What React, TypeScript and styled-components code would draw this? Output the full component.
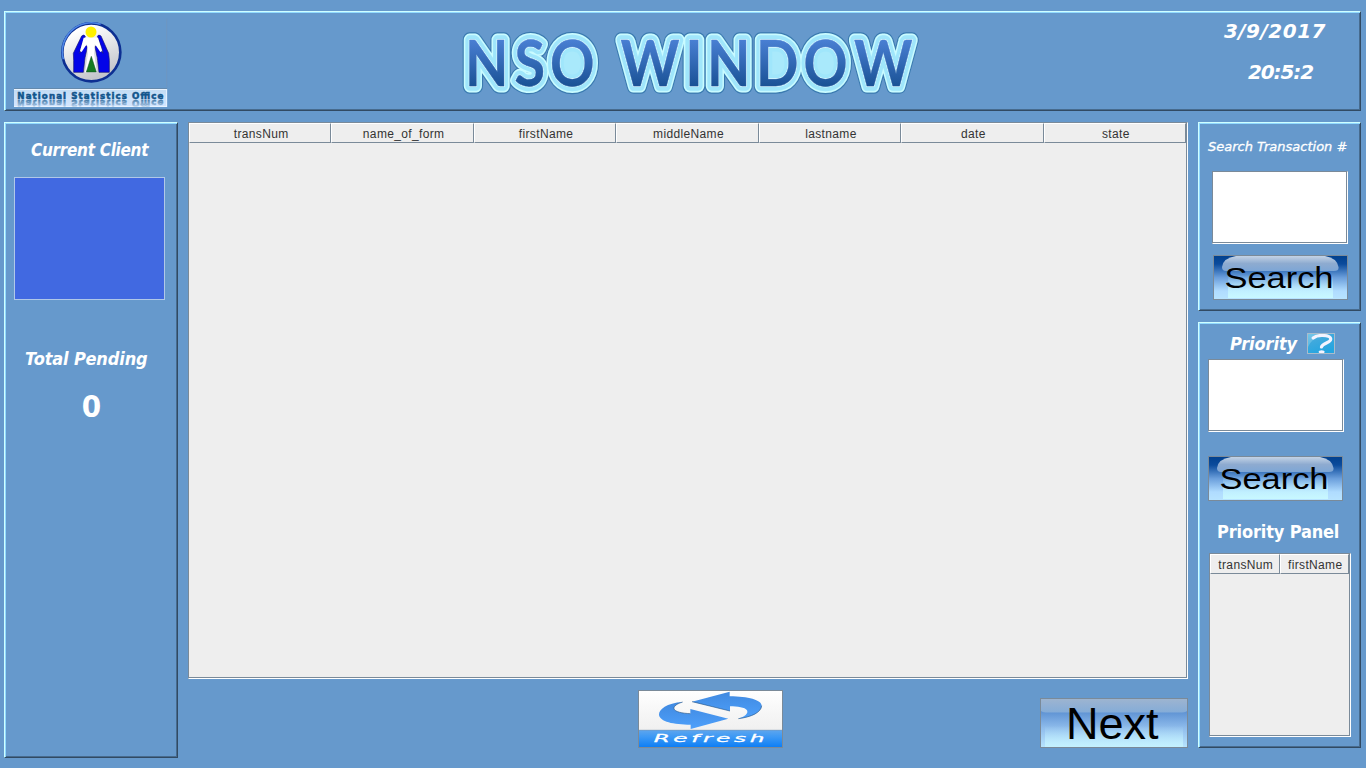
import React from "react";
import styled, { createGlobalStyle, css } from "styled-components";

const GlobalStyle = createGlobalStyle`
  *, *::before, *::after { box-sizing: border-box; }
  body { margin: 0; background: #6699cc; }
  svg { display: block; }
`;

const labelFont = `"DejaVu Sans Condensed", "DejaVu Sans", sans-serif`;

const Page = styled.div`
  width: 1366px;
  height: 768px;
  padding: 11px 5px 10px 4px;
  display: flex;
  flex-direction: column;
  gap: 11px;
  background: #6699cc;
  overflow: hidden;
`;

const raised = css`
  border: 1px solid;
  border-color: #cfffff #314a63 #314a63 #cfffff;
  box-shadow: inset 1px 1px 0 #91daff, inset -1px -1px 0 #476b8e;
`;

const Header = styled.header`
  ${raised}
  height: 100px;
  display: flex;
  align-items: flex-start;
  padding: 5px 34px 0 9px;
`;

const Logo = styled.svg`
  width: 154px;
  height: 90px;
`;

const Title = styled.svg`
  width: 464px;
  height: 90px;
  margin-left: 292px;
`;

const Clock = styled.div`
  margin-left: auto;
  padding-top: 2px;
  display: flex;
  flex-direction: column;
  gap: 17px;
  align-items: flex-end;
`;

const ClockLine = styled.time<{ $inset?: number; $spacing: number }>`
  font: italic bold 20px/24px "DejaVu Sans", sans-serif;
  letter-spacing: ${(p) => p.$spacing}px;
  color: #fff;
  margin-right: ${(p) => p.$inset ?? 0}px;
`;

const Body = styled.main`
  display: grid;
  grid-template-columns: 174px 1000px 163px;
  column-gap: 10px;
  align-items: start;
`;

const Panel = styled.section<{ $height: number }>`
  ${raised}
  height: ${(p) => p.$height}px;
  display: flex;
  flex-direction: column;
  align-items: flex-start;
`;

const Sidebar = styled.div`
  display: flex;
  flex-direction: column;
  gap: 11px;
`;

const Label = styled.div<{
  $top?: number;
  $left: number;
  $spacing?: number;
  $upright?: boolean;
  $size?: number;
}>`
  font: ${(p) => (p.$upright ? "normal" : "italic")} bold ${(p) => p.$size ?? 18}px/24px ${labelFont};
  letter-spacing: ${(p) => p.$spacing ?? 0}px;
  color: #fff;
  white-space: nowrap;
  margin: ${(p) => p.$top ?? 0}px 0 0 ${(p) => p.$left}px;
`;

const SmallLabel = styled(Label)`
  font: italic normal 13px/20px "DejaVu Sans", sans-serif;
  -webkit-text-stroke: 0.3px #fff;
`;

const ClientBox = styled.div`
  width: 151px;
  height: 123px;
  margin: 15px 0 0 9px;
  background: #4169e1;
  border: 1px solid #b0c8e8;
`;

const Count = styled.div`
  width: 173px;
  margin-top: 17px;
  font: bold 31px/36px ${labelFont};
  color: #fff;
  text-align: center;
`;

const etched = css`
  border: 1px solid;
  border-color: #7a8a99 #fff #fff #7a8a99;
  box-shadow: inset -1px -1px 0 #7a8a99;
`;

const Field = styled.input<{ $top: number; $left: number }>`
  ${etched}
  width: 136px;
  height: 73px;
  padding: 4px 8px;
  margin: ${(p) => p.$top}px 0 0 ${(p) => p.$left}px;
  background: #fff;
  border-radius: 0;
  outline: none;
`;

const PictureButton = styled.button<{
  $w: number;
  $h: number;
  $top?: number;
  $left?: number;
  $edge?: string;
}>`
  width: ${(p) => p.$w}px;
  height: ${(p) => p.$h}px;
  margin: ${(p) => p.$top ?? 0}px 0 0 ${(p) => p.$left ?? 0}px;
  padding: 0;
  border: 1px solid ${(p) => p.$edge ?? "#7a8a99"};
  background: none;
  overflow: hidden;
`;

const PriorityRow = styled.div`
  display: flex;
  align-items: center;
  justify-content: space-between;
  width: 136px;
  height: 21px;
  margin-top: 10px;
`;

const Center = styled.div`
  display: flex;
  flex-direction: column;
`;

const TablePane = styled.div<{ $w: number; $h: number; $top?: number; $left?: number }>`
  ${etched}
  width: ${(p) => p.$w}px;
  height: ${(p) => p.$h}px;
  margin: ${(p) => p.$top ?? 0}px 0 0 ${(p) => p.$left ?? 0}px;
  padding-right: 1px;
  background: #eee;
`;

const HeadRow = styled.div<{ $count: number }>`
  display: grid;
  grid-template-columns: repeat(${(p) => p.$count}, 1fr);
  grid-template-rows: 20px;
`;

const HeadCell = styled.div`
  height: 20px;
  border: 1px solid;
  border-color: #fff #7a8a99 #7a8a99 #fff;
  font: 12px/20px "Liberation Sans", Arial, sans-serif;
  letter-spacing: 0.35px;
  padding-left: 2px;
  color: #333;
  text-align: center;
  white-space: nowrap;
`;

const Actions = styled.div`
  display: flex;
  justify-content: space-between;
  align-items: flex-end;
  height: 58px;
  margin-top: 11px;
  padding-left: 450px;
`;

function Table(props: { columns: string[]; w: number; h: number; top?: number; left?: number }) {
  return (
    <TablePane $w={props.w} $h={props.h} $top={props.top} $left={props.left}>
      <HeadRow $count={props.columns.length}>
        {props.columns.map((c) => (
          <HeadCell key={c}>{c}</HeadCell>
        ))}
      </HeadRow>
    </TablePane>
  );
}

function OfficeLogo() {
  const caption = {
    fontFamily: '"DejaVu Sans", sans-serif',
    fontWeight: 700,
    fontSize: 26,
    textLength: 438,
    strokeWidth: 1.6,
  };
  return (
    <Logo viewBox="42 51 462 270">
      <defs>
        <linearGradient id="disc" x1="0" y1="0" x2="0.4" y2="1">
          <stop offset="0.2" stopColor="#fff" />
          <stop offset="1" stopColor="#c4c6cc" />
        </linearGradient>
        <linearGradient id="bar" x1="0" y1="0" x2="0" y2="1">
          <stop offset="0" stopColor="#c2dcf4" />
          <stop offset="1" stopColor="#d4e6ff" />
        </linearGradient>
        <linearGradient id="mirror" x1="0" y1="0" x2="0" y2="1">
          <stop offset="0" stopColor="#2f6b9c" stopOpacity="0" />
          <stop offset="1" stopColor="#2f6b9c" stopOpacity="0.95" />
        </linearGradient>
      </defs>
      <path d="M500 56V262" stroke="#7196bd" strokeWidth="2" />
      <circle cx="274" cy="157" r="87" fill="url(#disc)" stroke="#0d2f92" strokeWidth="8" />
      <path d="M190 178A87 87 0 0 1 302 73" fill="none" stroke="#4d86e6" strokeWidth="5" />
      <path
        d="M245 108q7-6 11 1l-13 34-4 17 12-19q9-8 11 0l-5 24q-2 7-3 17l-4 35h-29v-36l-1-21z"
        fill="#0404e8"
        stroke="#191970"
        strokeWidth="2"
      />
      <path
        d="M303 108q-7-6-11 1l13 34 4 17-13-19q-9-8-11 0l5 24q2 7 3 17l4 35h31v-36l-2-21z"
        fill="#0404e8"
        stroke="#191970"
        strokeWidth="2"
      />
      <path d="M251 113h43l12 40-5 3-17-25-2 30 9 56H255l9-56-3-30-16 25-5-3z" fill="#fff" />
      <path d="M274 169l15 47h-30z" fill="#157a22" stroke="#0c4a20" strokeWidth="1.5" />
      <circle cx="273" cy="96" r="16.5" fill="#fff000" />
      <path d="M42 265.5h459" stroke="#6489ad" strokeWidth="3" />
      <rect x="42" y="268" width="459" height="53" fill="url(#bar)" />
      <path d="M42 268.5h459M500 267v54M42 319.5h459" stroke="#e8f3ff" strokeWidth="3" />
      <text x="52" y="297" {...caption} fill="#12558c" stroke="#12558c">
        National Statistics Office
      </text>
      <g transform="translate(0 597) scale(1 -1)" aria-hidden="true">
        <text x="52" y="297" {...caption} fill="url(#mirror)" stroke="url(#mirror)">
          National Statistics Office
        </text>
      </g>
    </Logo>
  );
}

/* left edge and advance width of every letter of the banner */
const bannerLetters: [string, number, number][] = [
  ["N", 465, 43.5],
  ["S", 514.5, 30.5],
  ["O", 550, 44.5],
  ["W", 620.5, 59],
  ["I", 685, 18],
  ["N", 707, 43.5],
  ["D", 756, 42.5],
  ["O", 803.5, 44],
  ["W", 854, 58.5],
];

function Banner() {
  const layers = [
    { stroke: "#3a7ab0", strokeWidth: 15.5, fill: "#3a7ab0" },
    { stroke: "#c9fbff", strokeWidth: 13, fill: "#c9fbff" },
    { stroke: "#a0e6fb", strokeWidth: 9.5, fill: "#a0e6fb" },
    { stroke: "#d9f6ff", strokeWidth: 1.8, fill: "#d9f6ff" },
    { stroke: "url(#banner)", strokeWidth: 0.4, fill: "url(#banner)" },
  ];
  return (
    <Title viewBox="460 17 464 90">
      <defs>
        <linearGradient id="banner" gradientUnits="userSpaceOnUse" x1="0" y1="39" x2="0" y2="86">
          <stop offset="0" stopColor="#4a80d4" />
          <stop offset="1" stopColor="#1a5296" />
        </linearGradient>
      </defs>
      {layers.map((layer, i) => (
        <g
          key={i}
          {...layer}
          strokeLinejoin="round"
          fontFamily="Lato, sans-serif"
          fontWeight="700"
          fontSize="64"
          aria-hidden={i < layers.length - 1}
        >
          {i === 2 && (
            <g stroke="none" fill="#a9e9fb">
              <ellipse cx="572" cy="63" rx="15" ry="19" />
              <ellipse cx="826" cy="63" rx="15" ry="19" />
              <rect x="766" y="46" width="24" height="34" />
            </g>
          )}
          {bannerLetters.map(([ch, x, w]) => (
            <text key={x} x={x} y="85.5" textLength={w} lengthAdjust="spacingAndGlyphs">
              {ch}
            </text>
          ))}
        </g>
      ))}
    </Title>
  );
}

function SearchButton({ id, top, left }: { id: string; top: number; left: number }) {
  return (
    <PictureButton $w={135} $h={45} $top={top} $left={left}>
      <svg width="133" height="43" viewBox="1 1 133 43">
        <defs>
          <linearGradient id={`${id}-bg`} x1="0" y1="0" x2="0" y2="1">
            <stop offset="0" stopColor="#003f8c" />
            <stop offset="0.2" stopColor="#0b4b9c" />
            <stop offset="0.5" stopColor="#6a9edb" />
            <stop offset="0.8" stopColor="#b0dcff" />
            <stop offset="1" stopColor="#b8e4ff" />
          </linearGradient>
          <linearGradient id={`${id}-gloss`} x1="0" y1="0" x2="0" y2="1">
            <stop offset="0" stopColor="#c3d3e6" />
            <stop offset="0.5" stopColor="#8eabd0" />
            <stop offset="1" stopColor="#7da6d6" />
          </linearGradient>
          <linearGradient id={`${id}-glow`} x1="0" y1="0" x2="0" y2="1">
            <stop offset="0" stopColor="#c8f8ff" stopOpacity="0" />
            <stop offset="1" stopColor="#c8f8ff" />
          </linearGradient>
        </defs>
        <rect width="135" height="45" fill={`url(#${id}-bg)`} />
        <rect x="15" y="20" width="105" height="23" fill={`url(#${id}-glow)`} />
        <path d="M9 12Q10 3 23 1H112Q124 3 125.500 12Q126 16 121 16H13Q9 16 9 12Z" fill={`url(#${id}-gloss)`} />
        <text
          x="11.500"
          y="33"
          fontFamily='"Liberation Sans", Arial, sans-serif'
          fontSize="29"
          textLength="109"
          lengthAdjust="spacingAndGlyphs"
          fill="#000"
        >
          Search
        </text>
      </svg>
    </PictureButton>
  );
}

function HelpButton() {
  return (
    <PictureButton $w={28} $h={21} $edge="#a9bccb">
      <svg width="26" height="19" viewBox="0 0 26 19">
        <defs>
          <linearGradient id="help" x1="0" y1="0" x2="0.500" y2="1">
            <stop offset="0" stopColor="#5cb9e4" />
            <stop offset="0.4" stopColor="#3fa9dd" />
            <stop offset="1" stopColor="#25a5e0" />
          </linearGradient>
        </defs>
        <rect width="26" height="19" fill="url(#help)" />
        <path d="M0 0H14Q4 4 0 13Z" fill="#8fd2ee" opacity="0.45" />
        <path
          d="M5.200 4C7.500 2 11 1.400 14.500 1.500c4.800 .100 8.300 1 8.200 3.700-.100 3.800-8.400 3.600-9.200 7.800"
          fill="none"
          stroke="#f3f3ff"
          strokeWidth="3.200"
          strokeLinecap="round"
        />
        <ellipse cx="13.600" cy="17.800" rx="3" ry="1.600" fill="#f3f3ff" />
      </svg>
    </PictureButton>
  );
}

function RefreshButton() {
  return (
    <PictureButton $w={145} $h={58}>
      <svg width="143" height="56" viewBox="57 63 429 168">
        <defs>
          <linearGradient id="paper" x1="0" y1="0" x2="0" y2="1">
            <stop offset="0" stopColor="#fff" />
            <stop offset="1" stopColor="#f0f0f0" />
          </linearGradient>
          <linearGradient id="band" x1="0" y1="0" x2="0" y2="1">
            <stop offset="0" stopColor="#5ea6ee" />
            <stop offset="0.4" stopColor="#3b98f5" />
            <stop offset="1" stopColor="#0a7cf5" />
          </linearGradient>
          <linearGradient id="arrow" x1="0" y1="0" x2="0" y2="1">
            <stop offset="0" stopColor="#4089e0" />
            <stop offset="1" stopColor="#4ea0fb" />
          </linearGradient>
        </defs>
        <rect x="54" y="60" width="435" height="120" fill="url(#paper)" />
        <path
          d="M188 96C140 99 116 118 117 135C120 155 160 164 212 164V177L325 146L211 117V131C186 130 165 125 162 117C160 108 172 101 188 96Z"
          fill="url(#arrow)"
        />
        <path
          d="M216 95L329 65V79C385 79 424 90 425 107C424 127 395 141 355 146C374 140 386 131 381 121C375 112 352 109 330 109V123Z"
          fill="url(#arrow)"
        />
        <path
          d="M188 96C172 101 160 108 162 117C165 125 186 130 211 131M425 107C424 127 395 141 355 146M216 95L330 123"
          fill="none"
          stroke="#24507f"
          strokeWidth="1.800"
        />
        <rect x="54" y="180" width="435" height="54" fill="url(#band)" />
        <path d="M54 180.500H489" stroke="#7e93ab" strokeWidth="1.500" />
        <g transform="translate(101 217) scale(2.05 1)">
          <text
            fontFamily='"DejaVu Sans", sans-serif'
            fontStyle="italic"
            fontSize="34"
            textLength="162"
            fill="#fff"
            stroke="#fff"
            strokeWidth="0.8"
          >
            Refresh
          </text>
        </g>
      </svg>
    </PictureButton>
  );
}

function NextButton() {
  return (
    <PictureButton $w={148} $h={50}>
      <svg width="146" height="48" viewBox="1 1 146 48">
        <defs>
          <linearGradient id="next-bg" x1="0" y1="0" x2="0" y2="1">
            <stop offset="0.28" stopColor="#5f93d4" />
            <stop offset="0.6" stopColor="#8fbcec" />
            <stop offset="1" stopColor="#b9e6ff" />
          </linearGradient>
          <linearGradient id="next-gloss" x1="0" y1="0" x2="0" y2="1">
            <stop offset="0" stopColor="#9db4d0" />
            <stop offset="1" stopColor="#84acd8" />
          </linearGradient>
          <linearGradient id="next-glow" x1="0" y1="0" x2="0" y2="1">
            <stop offset="0" stopColor="#c4f2ff" stopOpacity="0" />
            <stop offset="1" stopColor="#c4f2ff" />
          </linearGradient>
        </defs>
        <rect width="148" height="50" fill="url(#next-bg)" />
        <rect x="5" y="28" width="138" height="22" fill="url(#next-glow)" />
        <path d="M1 1H147V13Q145 14.500 140 14.500H8Q3 14.500 1 13Z" fill="url(#next-gloss)" />
        <text
          x="26"
          y="40.500"
          fontFamily='"Liberation Sans", Arial, sans-serif'
          fontSize="44"
          textLength="92.500"
          lengthAdjust="spacingAndGlyphs"
          fill="#000"
        >
          Next
        </text>
      </svg>
    </PictureButton>
  );
}

export default function App() {
  return (
    <Page>
      <GlobalStyle />
      <Header>
        <OfficeLogo />
        <Banner />
        <Clock>
          <ClockLine $spacing={0.5}>3/9/2017</ClockLine>
          <ClockLine $spacing={-1.1} $inset={13}>20:5:2</ClockLine>
        </Clock>
      </Header>
      <Body>
        <Panel $height={636}>
          <Label $top={15} $left={26} $size={17} $spacing={-0.3}>Current Client</Label>
          <ClientBox />
          <Label $top={47} $left={20} $spacing={-0.1}>Total Pending</Label>
          <Count>0</Count>
        </Panel>
        <Center>
          <Table
            w={1000}
            h={557}
            columns={["transNum", "name_of_form", "firstName", "middleName", "lastname", "date", "state"]}
          />
          <Actions>
            <RefreshButton />
            <NextButton />
          </Actions>
        </Center>
        <Sidebar>
          <Panel $height={189}>
            <SmallLabel $top={14} $left={9}>Search Transaction #</SmallLabel>
            <Field $top={14} $left={13} aria-label="Transaction number" />
            <SearchButton id="find" top={11} left={14} />
          </Panel>
          <Panel $height={426}>
            <PriorityRow>
              <Label $left={31} $spacing={-0.1}>Priority</Label>
              <HelpButton />
            </PriorityRow>
            <Field $top={5} $left={9} aria-label="Priority number" />
            <SearchButton id="prio" top={24} left={9} />
            <Label $top={19} $left={18} $spacing={-0.15} $upright>Priority Panel</Label>
            <Table w={142} h={184} top={9} left={10} columns={["transNum", "firstName"]} />
          </Panel>
        </Sidebar>
      </Body>
    </Page>
  );
}
